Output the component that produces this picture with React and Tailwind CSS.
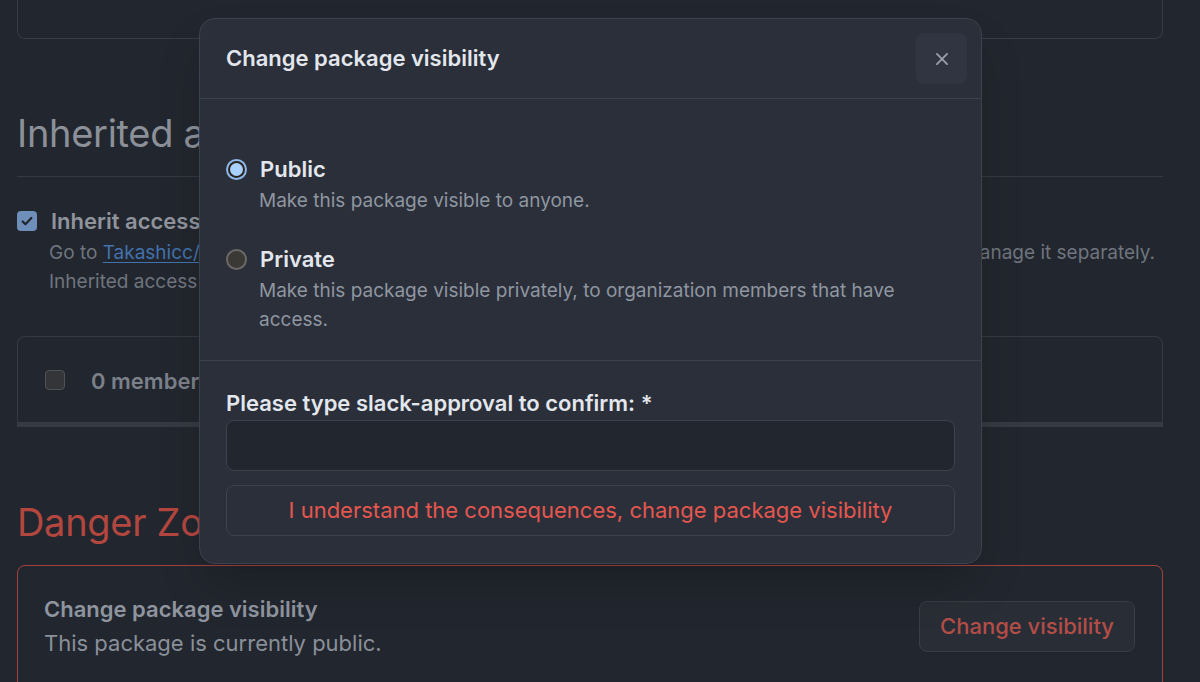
import React from "react";

const font = { fontFamily: "Inter, 'Noto Sans', sans-serif" };

const CloseIcon = () => (
  <svg width="18" height="18" viewBox="0 0 16 16" fill="none">
    <path d="M3.5 3.5l9 9M12.5 3.5l-9 9" stroke="#9aa1ab" strokeWidth="1.6" strokeLinecap="round" />
  </svg>
);

const CheckIcon = () => (
  <svg width="14" height="14" viewBox="0 0 16 16" fill="none">
    <path d="M3 8.5l3.2 3.2L13 4.5" stroke="#1f242b" strokeWidth="2.4" strokeLinecap="round" strokeLinejoin="round" />
  </svg>
);

const Radio = ({ checked }) =>
  checked ? (
    <div className="w-[21px] h-[21px] shrink-0 rounded-full bg-[#8fb9ea] p-[2px]">
      <div className="w-full h-full rounded-full bg-[#2a241f] p-[2px]">
        <div className="w-full h-full rounded-full bg-[#a9d1ff]" />
      </div>
    </div>
  ) : (
    <div className="w-[21px] h-[21px] shrink-0 rounded-full border-2 border-[#6a6966] bg-[#3b3936]" />
  );

const VisibilityOption = ({ checked, label, desc }) => (
  <div>
    <div className="flex items-center gap-[13px]">
      <Radio checked={checked} />
      <span className="text-[22px] leading-[30px] font-semibold text-[#e3e7ed]">{label}</span>
    </div>
    <p className="mt-[2px] pl-[33px] max-w-[700px] text-[19px] leading-[29px] text-[#8f96a0]">{desc}</p>
  </div>
);

export default function App() {
  return (
    <div className="relative w-[1200px] h-[682px] overflow-hidden bg-[#22262e]" style={font}>
      {/* Page behind the dialog */}
      <div className="px-[17px] w-[1180px]">
        <div className="h-[39px] rounded-b-[8px] border-x border-b border-[#363b44]" />

        {/* Inherited access */}
        <h2 className="mt-[70px] pb-[19px] border-b border-[#343942] text-[38px] leading-[48px] text-[#8c9199] tracking-[-0.3px]">
          Inherited access
        </h2>

        <div className="mt-[29px] flex items-center gap-[14px]">
          <div className="w-[20px] h-[20px] rounded-[4px] bg-[#6e8fba] flex items-center justify-center">
            <CheckIcon />
          </div>
          <span className="text-[22px] leading-[30px] font-semibold text-[#8f949c]">
            Inherit access from source repository (recommended)
          </span>
        </div>
        <div className="mt-[2px] pl-[32px] text-[19px] leading-[29px] text-[#6f757e]">
          <p className="whitespace-nowrap">
            Go to{" "}
            <span className="text-[#4272ad] underline underline-offset-[3px]">Takashicc/slack-approval</span>{" "}
            to update the access settings for this package, or uncheck the box to manage it separately.
          </p>
          <p className="whitespace-nowrap">Inherited access is managed by the repository Takashicc/slack-approval.</p>
        </div>

        <div className="mt-[40px] h-[91px] rounded-t-[8px] border border-b-[5px] border-[#353a43] flex items-center pl-[27px] gap-[26px]">
          <div className="w-[20px] h-[20px] rounded-[4px] border border-[#4f5157] bg-[#333538]" />
          <span className="text-[22px] font-semibold text-[#7b8089] pt-[4px]">0 members</span>
        </div>

        {/* Danger zone */}
        <h2 className="mt-[71px] text-[38px] leading-[48px] text-[#b3463f] tracking-[-0.3px]">Danger Zone</h2>
        <div className="mt-[19px] h-[140px] rounded-[8px] border-[1.5px] border-[#a6423c] flex justify-between pl-[26px] pr-[27px] pt-[28px]">
          <div>
            <p className="text-[22px] leading-[30px] font-semibold text-[#8f959e]">Change package visibility</p>
            <p className="mt-[2px] text-[22px] leading-[34px] text-[#8a9099]">This package is currently public.</p>
          </div>
          <button className="mt-[7px] h-[51px] px-[20px] rounded-[8px] border border-[#383d46] bg-[#292e36] text-[22px] font-medium text-[#b24d47]">
            Change visibility
          </button>
        </div>
      </div>

      {/* Dialog */}
      <div className="absolute left-[199px] top-[18px] w-[783px] rounded-[16px] border border-[#3c424d] bg-[#2a2f3a] shadow-2xl">
        <div className="h-[80px] flex items-center justify-between pl-[26px] pr-[14px] border-b border-[#3c424d]">
          <h3 className="text-[22px] font-semibold text-[#e3e7ed]">Change package visibility</h3>
          <button className="w-[51px] h-[51px] rounded-[8px] bg-[#303541] flex items-center justify-center">
            <CloseIcon />
          </button>
        </div>

        <div className="pt-[55px] pb-[26px] pl-[26px] pr-[27px] flex flex-col gap-[29px] border-b border-[#3c424d]">
          <VisibilityOption checked label="Public" desc="Make this package visible to anyone." />
          <VisibilityOption
            label="Private"
            desc="Make this package visible privately, to organization members that have access."
          />
        </div>

        <div className="pt-[27px] pb-[27px] px-[26px]">
          <label className="block text-[22px] leading-[30px] font-semibold text-[#e3e7ed]">
            Please type slack-approval to confirm: *
          </label>
          <input
            type="text"
            className="mt-[2px] block w-full h-[51px] rounded-[8px] border border-[#3d434e] bg-[#22262e] px-3 text-[18px] text-[#e3e7ed] outline-none"
          />
          <button className="mt-[14px] w-full h-[51px] rounded-[8px] border border-[#3d434e] bg-[#2a2f3a] text-[22px] text-[#e5574e]">
            I understand the consequences, change package visibility
          </button>
        </div>
      </div>
    </div>
  );
}
